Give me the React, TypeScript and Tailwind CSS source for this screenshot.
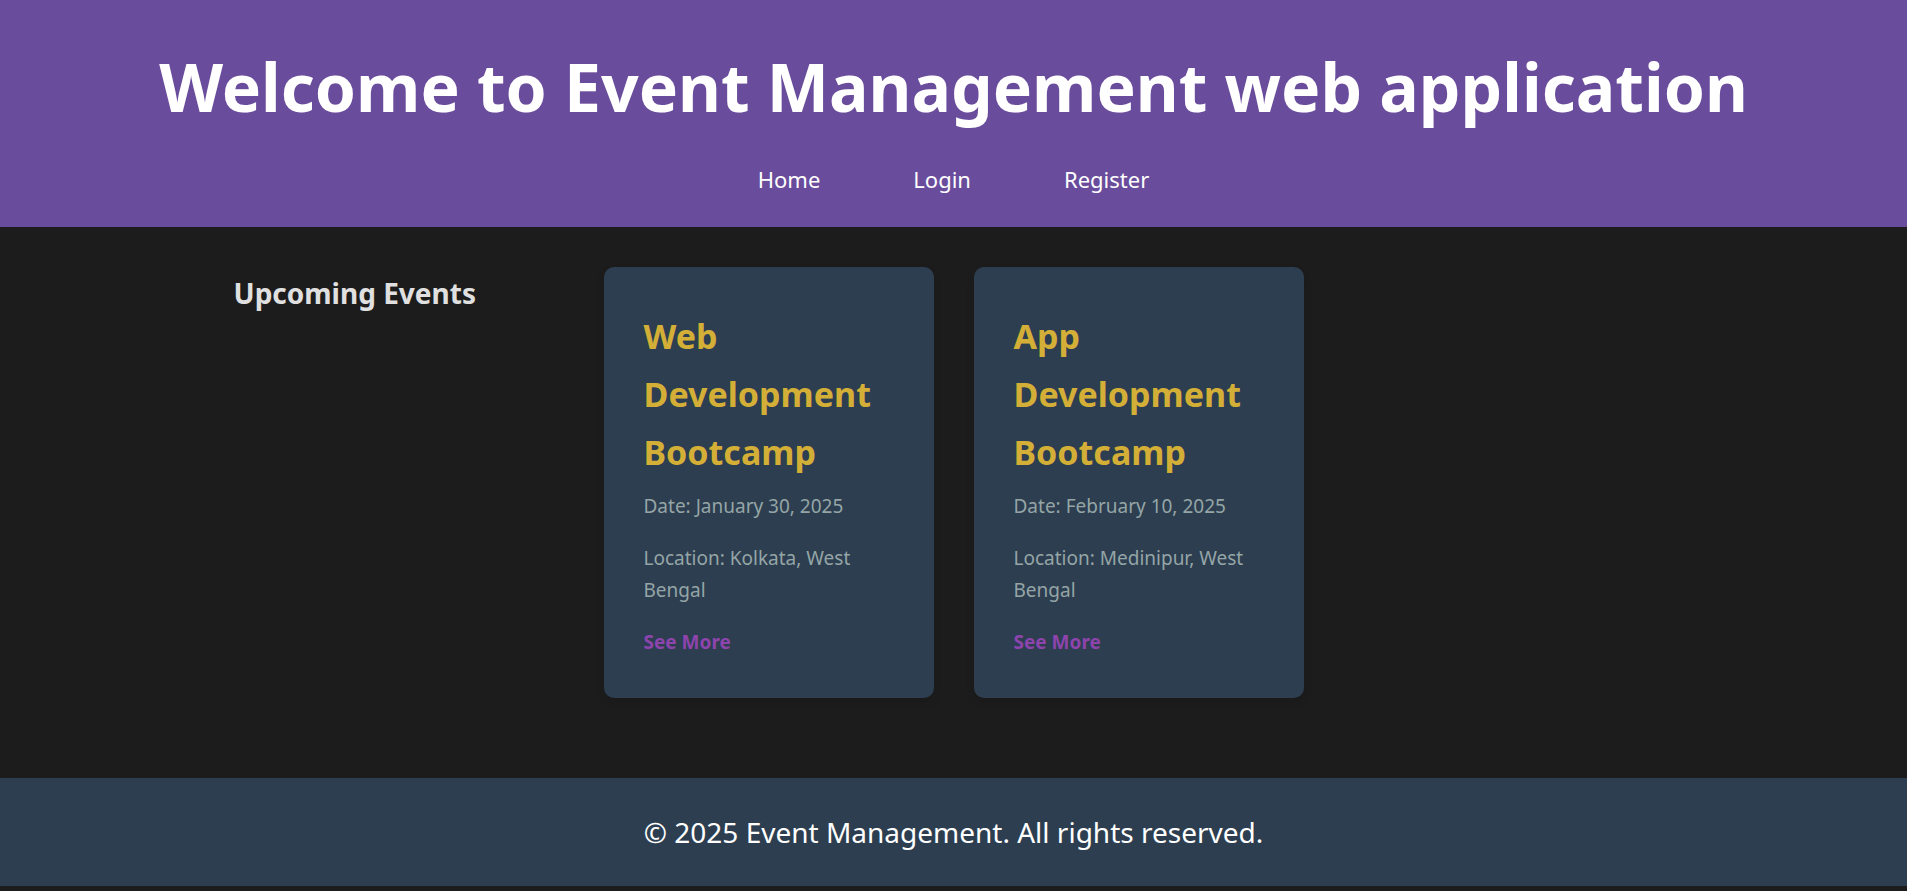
const events = [
  { title: "Web Development Bootcamp", date: "January 30, 2025", location: "Kolkata, West Bengal" },
  { title: "App Development Bootcamp", date: "February 10, 2025", location: "Medinipur, West Bengal" },
];

const links = ["Home", "Login", "Register"];

export default function App() {
  return (
    <div className="min-h-screen bg-[#1c1c1c] font-['Noto_Sans',sans-serif] text-[#e0e0e0]">
      <header className="bg-[#6a4c9c] px-5 pt-10 pb-7 text-center text-white">
        <h1 className="text-[66px] leading-[92px] font-bold">Welcome to Event Management web application</h1>
        <nav className="mt-7">
          <ul className="flex justify-center gap-[93px] text-[22px] leading-[39px]">
            {links.map((l) => (
              <li key={l}><a href="#">{l}</a></li>
            ))}
          </ul>
        </nav>
      </header>
      <main className="mx-auto grid max-w-[1440px] grid-cols-4 items-start gap-10 py-10">
        <h2 className="text-[28px] leading-[52px] font-bold whitespace-nowrap">Upcoming Events</h2>
        {events.map((e) => (
          <article key={e.title} className="rounded-[10px] bg-[#2c3e50] p-10 text-[19px] leading-8 shadow-[0_4px_8px_rgba(0,0,0,0.1)]">
            <h3 className="mb-[9px] text-[34px] leading-[58px] font-bold text-[#d4af37]">{e.title}</h3>
            <p className="mb-5 text-[#95a5a6]">Date: {e.date}</p>
            <p className="mb-5 text-[#95a5a6]">Location: {e.location}</p>
            <a href="#" className="font-bold text-[#8e44ad]">See More</a>
          </article>
        ))}
      </main>
      <footer className="mt-10 bg-[#2c3e50] py-8 text-center text-white">
        <p className="text-[28px] leading-[44px]">© 2025 Event Management. All rights reserved.</p>
      </footer>
    </div>
  );
}
